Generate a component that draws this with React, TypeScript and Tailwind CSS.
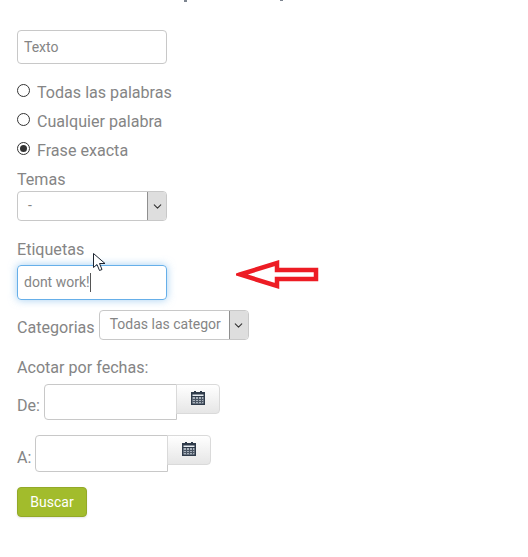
import { ChevronDown } from 'lucide-react'

const roboto = "font-['Roboto',sans-serif]"

function CalendarIcon() {
  return (
    <svg width="14" height="14" viewBox="0 0 14 14">
      <rect x="0" y="1" width="14" height="13" fill="#2f3b4a" />
      <rect x="3" y="0" width="2" height="3" fill="#2f3b4a" />
      <rect x="9" y="0" width="2" height="3" fill="#2f3b4a" />
      <rect x="1.5" y="3.5" width="11" height="1.5" fill="#e8edf2" />
      <rect x="1.5" y="6" width="11" height="6.5" fill="#a9b2bc" />
      <path d="M1.5 8.5h11M1.5 10.5h11M4.5 6v6.5M7.5 6v6.5M10.5 6v6.5" stroke="#4a5563" strokeWidth="1" />
    </svg>
  )
}

function Radio({ label, checked }: { label: string; checked?: boolean }) {
  return (
    <label className="flex h-[29px] items-center">
      <span className="mb-[4px] mr-[7px] flex h-[13px] w-[13px] items-center justify-center rounded-full border border-[#333] bg-white">
        {checked && <span className="h-[7px] w-[7px] rounded-full bg-[#333]" />}
      </span>
      <span className="mt-[2px] text-[16.1px] text-[#858585]">{label}</span>
    </label>
  )
}

function SelectBox({ value, width, textClass }: { value: string; width: string; textClass: string }) {
  return (
    <div className={`flex h-[30px] items-stretch overflow-hidden rounded-[4px] border border-[#c8c8c8] bg-white ${width}`}>
      <span className={`min-w-0 flex-1 whitespace-nowrap text-[14px] leading-[27px] text-[#858585] ${textClass}`}>
        {value}
      </span>
      <span className="flex w-[19px] items-center justify-center border-l border-[#8f8f8f] bg-[#dedede]">
        <ChevronDown size={13} strokeWidth={2} color="#333" />
      </span>
    </div>
  )
}

function DateRow({ label, inputHeight }: { label: string; inputHeight: string }) {
  return (
    <div className="flex items-start">
      <span className="self-end pb-[4px] pr-[4px] text-[16.1px] leading-[20px] text-[#858585]">{label}</span>
      <div className={`w-[133px] rounded-l-[4px] border border-[#c8c8c8] bg-white ${inputHeight}`} />
      <button className="-ml-px flex h-[30px] w-[44px] items-center justify-center rounded-r-[4px] border border-[#dadada] bg-gradient-to-b from-white to-[#e6e6e6] pb-[3px]">
        <CalendarIcon />
      </button>
    </div>
  )
}

export default function App() {
  return (
    <div className={`relative h-[557px] w-[528px] overflow-hidden bg-white pl-[17px] pt-[30px] ${roboto}`}>
      {/* bottoms of the heading letters cut off by the top edge */}
      <span className="absolute left-[184px] top-0 h-[2px] w-[3px] bg-[#7d8590]" />
      <span className="absolute left-[280px] top-0 h-[1px] w-[3px] bg-[#7d8590]" />

      <input
        readOnly
        value="Texto"
        className="block h-[34px] w-[150px] rounded-[4px] border border-[#c8c8c8] px-[6px] text-[14px] text-[#858585] outline-none"
      />

      <div className="mt-[14px]">
        <Radio label="Todas las palabras" />
        <Radio label="Cualquier palabra" />
        <Radio label="Frase exacta" checked />
      </div>

      <div className="mt-[5px] text-[16.1px] leading-[20px] text-[#858585]">Temas</div>
      <div className="mt-[1px]">
        <SelectBox value="-" width="w-[150px]" textClass="pl-[10px]" />
      </div>

      <div className="mt-[19px] text-[16.1px] leading-[20px] text-[#858585]">Etiquetas</div>
      <div className="mt-[5px] flex h-[35px] w-[150px] items-center rounded-[4px] border border-[#66afe9] px-[6px] text-[14px] text-[#858585] shadow-[0_0_8px_rgba(102,175,233,0.6)]">
        dont work!
        <span className="h-[19px] w-px bg-[#555]" />
      </div>

      <div className="mt-[10px] flex items-center">
        <span className="mr-[4px] mt-[6px] text-[16.1px] text-[#858585]">Categorias</span>
        <SelectBox value="Todas las categor" width="w-[150px]" textClass="pl-[10px]" />
      </div>

      <div className="mt-[18px] text-[16.1px] leading-[20px] text-[#858585]">Acotar por fechas:</div>
      <div className="mt-[6px]">
        <DateRow label="De:" inputHeight="h-[36px]" />
      </div>
      <div className="mt-[15px]">
        <DateRow label="A:" inputHeight="h-[37px]" />
      </div>

      <button className="mt-[15px] block h-[30px] w-[70px] rounded-[4px] border border-[#93a928] bg-[#a2bc2c] text-[14px] text-white shadow-[0_1px_2px_rgba(0,0,0,0.1)]">
        Buscar
      </button>

      {/* annotation arrow and mouse pointer pasted over the page */}
      <svg className="absolute left-[236px] top-[260px]" width="84" height="30" viewBox="0 0 84 30">
        <path d="M4 14.5 L41 3 L41 10 L80 10 L80 19 L41 19 L41 26 Z" fill="none" stroke="#ed1c24" strokeWidth="4.5" />
      </svg>
      <svg className="absolute left-[93px] top-[253px]" width="13" height="19" viewBox="0 0 13 19">
        <path d="M0.5 0.5 L0.5 14.5 L4 11.5 L6.5 17.5 L9 16.5 L6.5 10.5 L12 10.5 Z" fill="#fff" stroke="#1c2430" strokeWidth="1" />
      </svg>
    </div>
  )
}
